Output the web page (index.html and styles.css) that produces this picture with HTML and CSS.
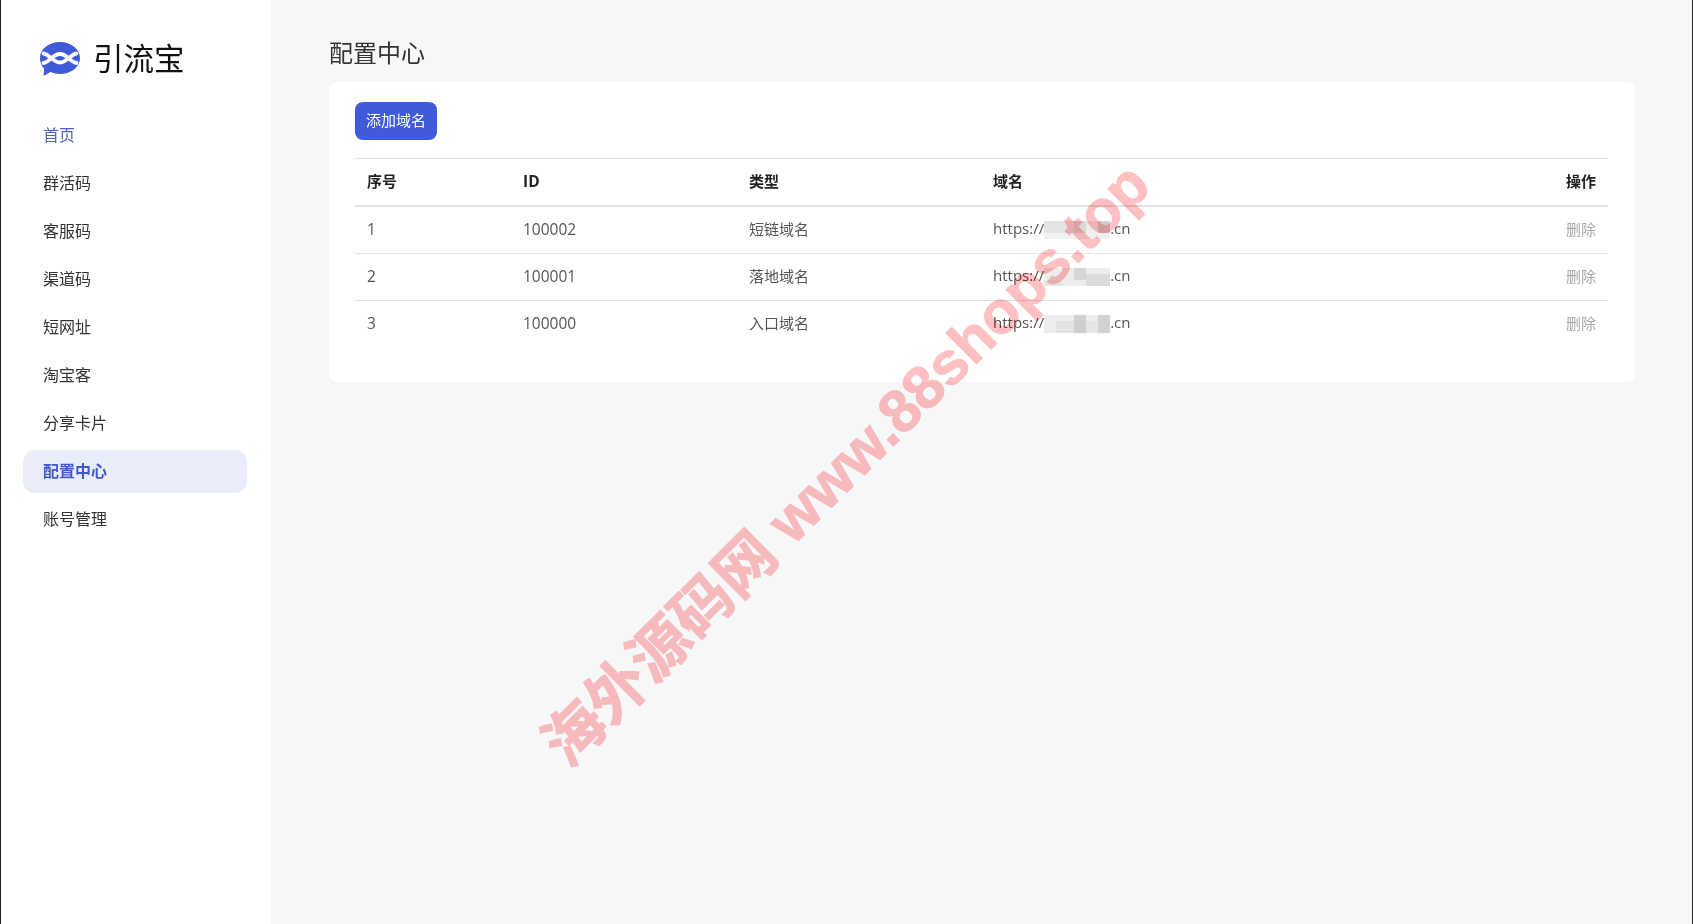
FILE: index.html
```html
<!DOCTYPE html>
<html lang="zh-CN">
<head>
  <meta charset="UTF-8" />
  <meta name="viewport" content="width=device-width, initial-scale=1.0"/>
  <title>配置中心</title>
  <link rel="stylesheet" href="styles.css">
</head>
<body>
  <div class="app">
    <!-- Sidebar -->
    <aside class="sidebar">
      <div class="brand">
        <svg class="brand-logo" viewBox="0 0 40 34" width="40" height="34">
          <path d="M20 0C31 0 40 7 40 16C40 25 31 32 20 32C16.500 32 13.500 31.300 10.500 30L3.500 34L4.200 26.800C1.500 24 0 20 0 16C0 7 9 0 20 0Z" fill="#3f5bd9"/>
          <path d="M3.500 11.500C9 12 13 20.500 20 20.500C27 20.500 31 12 36.500 11.500M3.500 21C9 20.500 13 12 20 12C27 12 31 20.500 36.500 21" fill="none" stroke="#fff" stroke-width="3.800" stroke-linecap="round"/>
        </svg>
        <span class="brand-name">引流宝</span>
      </div>
      <nav class="menu">
        <a class="menu-item home" href="#">首页</a>
        <a class="menu-item" href="#">群活码</a>
        <a class="menu-item" href="#">客服码</a>
        <a class="menu-item" href="#">渠道码</a>
        <a class="menu-item" href="#">短网址</a>
        <a class="menu-item" href="#">淘宝客</a>
        <a class="menu-item" href="#">分享卡片</a>
        <a class="menu-item active" href="#">配置中心</a>
        <a class="menu-item" href="#">账号管理</a>
      </nav>
    </aside>

    <!-- Main -->
    <main class="content">
      <h1 class="page-title">配置中心</h1>
      <div class="card">
        <button class="add-btn">添加域名</button>
        <table class="domains">
          <thead>
            <tr>
              <th class="col-no">序号</th>
              <th class="col-id num">ID</th>
              <th class="col-type">类型</th>
              <th>域名</th>
              <th class="col-op">操作</th>
            </tr>
          </thead>
          <tbody>
            <tr>
              <td class="num">1</td>
              <td class="num">100002</td>
              <td>短链域名</td>
              <td>https://<svg class="mosaic" viewBox="0 0 11 3" width="66" height="18" shape-rendering="crispEdges"><rect width="11" height="3" fill="#f1f1f1"/><rect width="11" height="2" y="0" fill="#e4e4e4"/><rect x="5" width="2" height="2" fill="#d9d9d9"/><rect x="7" width="2" fill="#ededed" height="2"/><rect x="9" width="2" height="2" fill="#d0d0d0"/></svg>.cn</td>
              <td class="col-op"><a class="del" href="#">删除</a></td>
            </tr>
            <tr>
              <td class="num">2</td>
              <td class="num">100001</td>
              <td>落地域名</td>
              <td>https://<svg class="mosaic" viewBox="0 0 11 3" width="66" height="18" shape-rendering="crispEdges"><rect width="11" height="3" fill="#ededed"/><rect x="5" width="2" height="2" fill="#d6d6d6"/><rect x="7" y="1" width="4" height="2" fill="#dcdcdc"/><rect width="3" y="2" height="1" fill="#e6e6e6"/></svg>.cn</td>
              <td class="col-op"><a class="del" href="#">删除</a></td>
            </tr>
            <tr>
              <td class="num">3</td>
              <td class="num">100000</td>
              <td>入口域名</td>
              <td>https://<svg class="mosaic" viewBox="0 0 11 3" width="66" height="18" shape-rendering="crispEdges"><rect width="11" height="3" fill="#ededed"/><rect x="2" y="1" width="3" height="2" fill="#e3e3e3"/><rect x="5" width="2" height="3" fill="#cfcfcf"/><rect x="7" y="1" width="2" height="2" fill="#e6e6e6"/><rect x="9" width="2" height="3" fill="#d2d2d2"/></svg>.cn</td>
              <td class="col-op"><a class="del" href="#">删除</a></td>
            </tr>
          </tbody>
        </table>
      </div>
    </main>
  </div>

  <!-- Watermark -->
  <div class="watermark">海外源码网 www.88shops.top</div>
</body>
</html>
```

FILE: styles.css
```css
html, body {
  margin: 0;
  padding: 0;
  height: 100%;
  overflow: hidden;
}

body {
  font-family: "Open Sans", "Noto Sans CJK SC", sans-serif;
  background: #f6f7f9;
  color: #555;
}

.app {
  display: flex;
  height: 100%;
  border-left: 1px solid #222;
  border-right: 1px solid #222;
  box-sizing: border-box;
}

/* Sidebar */
.sidebar {
  width: 270px;
  flex-shrink: 0;
  background: #fff;
  padding: 42px 24px 0 22px;
  box-sizing: border-box;
}

.brand {
  display: flex;
  align-items: center;
  height: 34px;
  padding-left: 17px;
  margin-bottom: 38px;
}

.brand-logo {
  flex-shrink: 0;
}

.brand-name {
  margin-left: 13px;
  padding-bottom: 5px;
  font-size: 30.5px;
  color: #111;
}

.menu-item {
  display: block;
  height: 43px;
  line-height: 43px;
  margin-bottom: 5px;
  padding-left: 20px;
  font-size: 16px;
  color: #333;
  text-decoration: none;
  border-radius: 12px;
}

.menu-item.home {
  color: #4a63b8;
}

.menu-item.active {
  background: #e8edf9;
  color: #4258cc;
  font-weight: 700;
}

/* Main */
.content {
  flex: 1;
  padding: 35px 57px 0 58px;
}

.page-title {
  margin: 0 0 11px;
  height: 36px;
  line-height: 36px;
  font-size: 24px;
  font-weight: 400;
  color: #333;
}

.card {
  background: #fff;
  border-radius: 8px;
  padding: 20px 27px 35px 26px;
}

.add-btn {
  display: block;
  width: 82px;
  height: 38px;
  padding: 0 0 3px;
  margin-bottom: 18px;
  border: none;
  border-radius: 8px;
  background: #3f5bd9;
  color: #fff;
  font-family: inherit;
  font-size: 15px;
  cursor: pointer;
}

.domains {
  width: 100%;
  border-collapse: collapse;
  table-layout: fixed;
  font-size: 15px;
  border-top: 1px solid #e3e3e5;
}

.domains th, .domains td {
  padding: 0 12px 3px;
  text-align: left;
}

.domains th {
  height: 43px;
  font-weight: 700;
  color: #222;
  border-bottom: 2px solid #e3e3e5;
}

.domains td {
  height: 43px;
  color: #555;
  border-bottom: 1px solid #e3e3e5;
}

.domains tbody tr:last-child td {
  border-bottom: none;
}

.domains .num {
  font-size: 15.5px;
}

.col-no { width: 132px; }
.col-id { width: 202px; }
.col-type { width: 220px; }

.domains .col-op {
  width: 80px;
  text-align: right;
}

.del {
  color: #a8a8a8;
  text-decoration: none;
}

.mosaic {
  vertical-align: middle;
}

/* Watermark */
.watermark {
  position: absolute;
  left: 842px;
  top: 460px;
  transform: translate(-50%, -50%) rotate(-44.8deg);
  white-space: nowrap;
  font-family: "Liberation Sans", "Noto Sans CJK SC", sans-serif;
  font-size: 60px;
  font-weight: 700;
  color: #ffc0c2;
  -webkit-text-stroke: 1px #ffc0c2;
  mix-blend-mode: multiply;
  pointer-events: none;
}
```
